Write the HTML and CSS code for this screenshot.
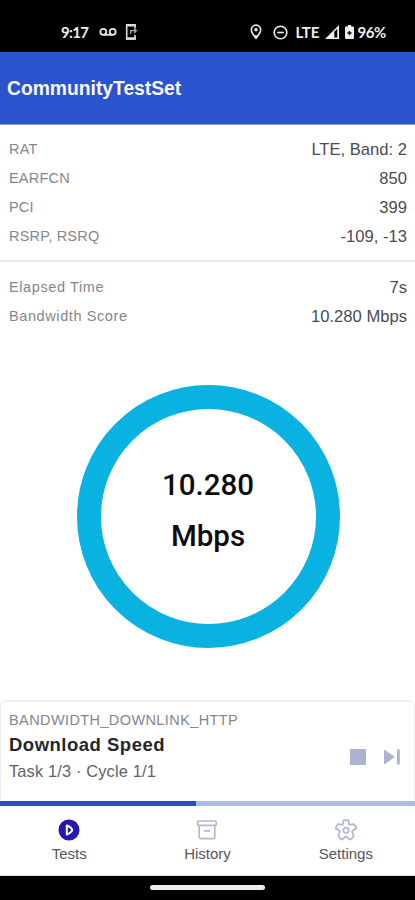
FILE: index.html
```
<!DOCTYPE html>
<html lang="en">
<head>
    <meta charset="UTF-8">
    <meta name="viewport" content="width=device-width, initial-scale=1.0">
    <title>CommunityTestSet</title>
    <link rel="stylesheet" href="styles.css">
</head>
<body>
    <div id="app">
        <div class="status">
            <span class="time">9:17</span>
            <svg class="voicemail" width="18" height="10" viewBox="0 0 18 10" fill="none" stroke="#e4e4e4" stroke-width="1.8">
                <circle cx="4.3" cy="4.8" r="3"/>
                <circle cx="13.7" cy="4.8" r="3"/>
                <path d="M4.3 7.8h9.4"/>
            </svg>
            <svg class="phone" width="13" height="18" viewBox="0 0 13 18" fill="none" stroke="#dcdcdc" stroke-width="1.6">
                <path d="M10 5.500V2H1.700v14H10v-4"/>
                <path d="M1 2.300h9.800M1 15.500h9.800" stroke-width="2.400"/>
                <path d="M5.800 11V7.700h5M9 5.500l2.300 2.200L9 10" stroke="#aaa" stroke-width="1.300"/>
            </svg>
            <svg class="pin" width="12" height="16" viewBox="0 0 12 16" fill="none" stroke="#eee" stroke-width="1.6">
                <path d="M6 14.300C3.500 11.200 1.300 8.600 1.300 5.800a4.700 4.700 0 0 1 9.400 0C10.700 8.600 8.500 11.200 6 14.300z"/>
                <circle cx="6" cy="5.800" r="1.700" fill="#eee" stroke="none"/>
                <path d="M6 11v3"/>
            </svg>
            <svg class="dnd" width="15" height="15" viewBox="0 0 15 15" fill="none" stroke="#eee" stroke-width="1.6">
                <circle cx="7.500" cy="7.500" r="6.300"/>
                <path d="M4.200 7.500h6.600"/>
            </svg>
            <span class="lte">LTE</span>
            <svg class="signal" width="14" height="14" viewBox="0 0 14 14">
                <path d="M0 14L14 0v14z" fill="#eee"/>
                <path d="M9.300 6.700l3-3v8.800h-3z" fill="#000"/>
            </svg>
            <svg class="battery" width="9" height="14" viewBox="0 0 9 14">
                <path d="M2.800 0h3.400v1.500H8a1 1 0 0 1 1 1V13a1 1 0 0 1-1 1H1a1 1 0 0 1-1-1V2.500a1 1 0 0 1 1-1h1.800z" fill="#eee"/>
                <path d="M4.500 6v4M2.500 8h4" stroke="#000" stroke-width="1.500"/>
            </svg>
            <span class="percent">96%</span>
        </div>

        <div class="header">
            <h1>CommunityTestSet</h1>
        </div>

        <ul class="info">
            <li><span>RAT</span><b>LTE, Band: 2</b></li>
            <li><span>EARFCN</span><b>850</b></li>
            <li><span>PCI</span><b>399</b></li>
            <li><span>RSRP, RSRQ</span><b>-109, -13</b></li>
        </ul>
        <ul class="info result">
            <li><span>Elapsed Time</span><b>7s</b></li>
            <li><span>Bandwidth Score</span><b>10.280 Mbps</b></li>
        </ul>

        <div class="gauge">
            <div class="ring">
                <p>10.280</p>
                <p>Mbps</p>
            </div>
        </div>

        <div class="task">
            <div class="task-text">
                <p class="type">BANDWIDTH_DOWNLINK_HTTP</p>
                <h2>Download Speed</h2>
                <p class="count">Task 1/3 · Cycle 1/1</p>
            </div>
            <div class="controls">
                <svg width="16" height="16" viewBox="0 0 16 16" fill="#adb3cf">
                    <path d="M0 0h16v16H0z"/>
                </svg>
                <svg width="16" height="16" viewBox="0 0 16 16" fill="#adb3cf">
                    <path d="M0 .5l11 7.500L0 15.500zM13 .5h2.800v15H13z"/>
                </svg>
            </div>
        </div>
        <div class="progress"><div class="bar"></div></div>

        <div class="nav">
            <div class="tab">
                <svg width="22" height="22" viewBox="0 0 22 22">
                    <circle cx="11" cy="11" r="10.500" fill="#2517b0"/>
                    <path d="M8.800 6.500v9c3-1.200 5-2.800 5.400-4.500-.4-1.700-2.400-3.300-5.400-4.500z" fill="none" stroke="#fff" stroke-width="2" stroke-linejoin="round"/>
                </svg>
                <span>Tests</span>
            </div>
            <div class="tab">
                <svg width="22" height="22" viewBox="0 0 22 22" fill="none" stroke="#b3b8d2" stroke-width="1.700" stroke-linejoin="round">
                    <rect x="1.800" y="2" width="18.400" height="4.400" rx="1"/>
                    <path d="M3.200 6.400v11.300a2 2 0 0 0 2 2h11.600a2 2 0 0 0 2-2V6.400M8 11.800h6"/>
                </svg>
                <span>History</span>
            </div>
            <div class="tab">
                <svg width="22" height="22" viewBox="0 0 22 22" fill="none" stroke="#b0b5d0" stroke-width="1.700" stroke-linejoin="round">
                    <path d="M8.600 1.400Q11 .7 13.400 1.400L14.300 5.800L18.900 5.200Q20.800 6.900 21.200 9.300L17.100 12.200L18.600 17.200Q17.200 19.700 14.900 20.700L11 17.400L7.100 20.700Q4.800 19.700 3.400 17.200L4.900 12.200L.8 9.300Q1.200 6.900 3.100 5.200L7.700 5.800Z"/>
                    <circle cx="11" cy="11.300" r="2.700"/>
                </svg>
                <span>Settings</span>
            </div>
        </div>
        <div class="home"><div></div></div>
    </div>
</body>
</html>
```
FILE: styles.css
```
*{
    margin: 0;
    padding: 0;
    box-sizing: border-box;
}
body{
    font-family: "Liberation Sans", Arial, sans-serif;
    background: #fff;
}
#app{
    display: flex;
    flex-direction: column;
    width: 415px;
    height: 900px;
    overflow: hidden;
}
svg{
    display: block;
    flex: none;
}
ul{
    list-style: none;
}
.status{
    display: flex;
    align-items: center;
    height: 52px;
    padding: 12px 29px 0 61px;
    background: #000;
    color: #eee;
    font: 700 15px/20px Lato, sans-serif;
}
.time{
    width: 27px;
    letter-spacing: -0.7px;
}
.voicemail{
    margin-left: 11px;
}
.phone{
    margin-left: 8px;
}
.pin{
    margin-left: auto;
}
.dnd{
    margin-left: 11px;
}
.lte{
    margin-left: 7px;
}
.signal{
    margin-left: 5px;
}
.battery{
    margin-left: 6px;
}
.percent{
    margin-left: 4px;
    letter-spacing: -0.4px;
}
.header{
    display: flex;
    align-items: center;
    height: 73px;
    padding: 2px 0 0 7px;
    background: #2b53cd;
    border-bottom: 1px solid #8ba0e3;
}
.header h1{
    font-size: 19.3px;
    line-height: 24px;
    color: #f7f8ff;
}
.info{
    padding: 10px 8px 9px 9px;
    border-bottom: 2px solid #e3e5e8;
}
.info li{
    display: flex;
    justify-content: space-between;
    height: 29px;
    line-height: 29px;
}
.info span{
    font-size: 14.5px;
    letter-spacing: 0.2px;
    color: #85878c;
}
.info b{
    font-size: 16.6px;
    font-weight: 400;
    color: #4a4c52;
}
.result{
    padding-top: 11px;
    border-bottom: 0;
}
.result span{
    letter-spacing: 0.6px;
}
.gauge{
    flex: 1;
    display: flex;
    justify-content: center;
    padding: 45px 0 0 1px;
}
.ring{
    width: 263px;
    height: 263px;
    padding-top: 51px;
    border: 24px solid #0ab2e2;
    border-radius: 50%;
    text-align: center;
    font: 500 29.5px/50.5px Roboto, sans-serif;
    color: #0c0c0c;
}
.task{
    display: flex;
    justify-content: space-between;
    height: 101px;
    padding: 8px 14px 0 8px;
    border: 2px solid #efeff0;
    border-width: 2px 1px 0;
    border-radius: 6px 6px 0 0;
}
.type{
    font-size: 14.5px;
    line-height: 20px;
    letter-spacing: 0.4px;
    color: #85878c;
}
.task h2{
    font-size: 18.5px;
    line-height: 29px;
    letter-spacing: 0.5px;
    color: #25262c;
}
.count{
    font-size: 16.4px;
    line-height: 24px;
    letter-spacing: 0.15px;
    color: #606268;
}
.controls{
    display: flex;
    gap: 18px;
    padding-top: 39px;
}
.progress{
    height: 5px;
    background: #aabbeb;
}
.bar{
    width: 196px;
    height: 100%;
    background: #2450c3;
}
.nav{
    display: flex;
    height: 70px;
    padding-top: 13px;
    border-bottom: 1px solid #ddd;
}
.tab{
    flex: 1;
    display: flex;
    flex-direction: column;
    align-items: center;
    font-size: 15px;
    line-height: 26px;
    color: #55575c;
}
.home{
    display: flex;
    justify-content: center;
    height: 24px;
    padding-top: 9px;
    background: #000;
}
.home div{
    width: 115px;
    height: 5px;
    border-radius: 3px;
    background: #eee;
}
```
